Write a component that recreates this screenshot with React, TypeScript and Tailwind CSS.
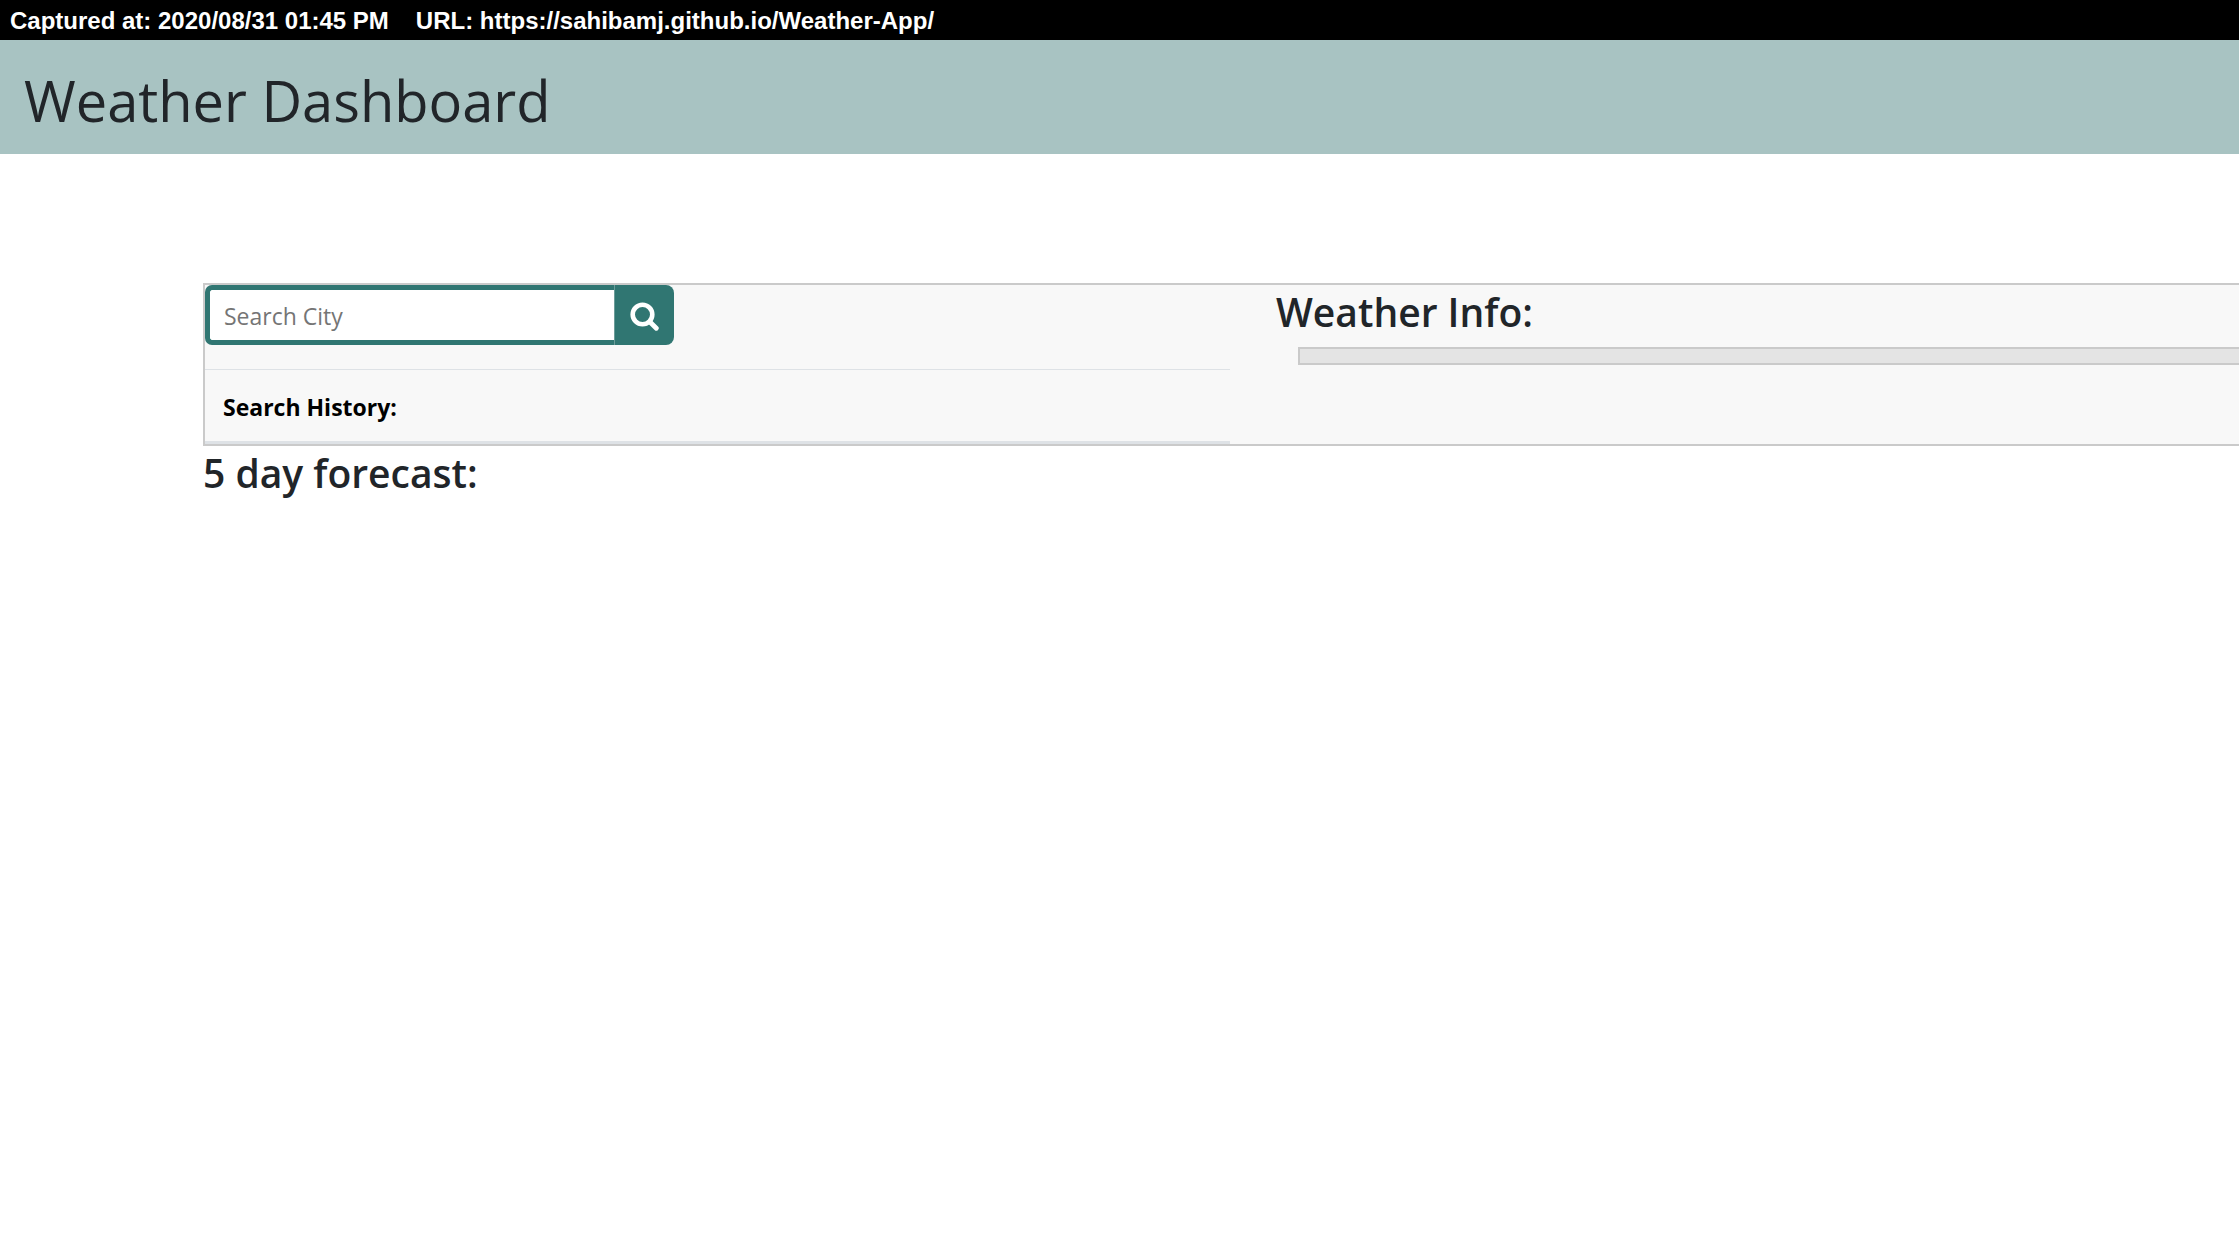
import { useState } from "react";

function CaptureBar() {
  return (
    <div className="flex h-10 items-center gap-[27px] whitespace-nowrap bg-black px-2.5 pt-0.5 font-['Liberation_Sans',sans-serif] text-2xl font-bold text-white">
      <span>Captured at: 2020/08/31 01:45 PM</span>
      <span>URL: https://sahibamj.github.io/Weather-App/</span>
    </div>
  );
}

function SearchForm() {
  const [city, setCity] = useState("");
  return (
    <form className="flex h-[60px] w-[469px]" onSubmit={(e) => e.preventDefault()}>
      <input
        type="text"
        aria-label="Search City"
        placeholder="Search City"
        value={city}
        onChange={(e) => setCity(e.target.value)}
        className="min-w-0 flex-1 rounded-l-[7px] border-[5px] border-r-0 border-[#307672] bg-white pb-0 pl-3.5 pt-0.5 text-[23px] text-[#212529] outline-none placeholder:text-[#757575]"
      />
      <button
        type="submit"
        aria-label="Search"
        className="flex w-[60px] items-center justify-center rounded-r-lg border-l border-[#6b9c99] bg-[#307672] pt-0.5 text-white"
      >
        <svg viewBox="0 0 29 29" className="size-[29px]" fill="none" stroke="currentColor" strokeLinecap="round">
          <circle cx="12.5" cy="12.5" r="9.8" strokeWidth="4.6" />
          <path d="M20 20l6.3 6.3" strokeWidth="4.8" />
        </svg>
      </button>
    </form>
  );
}

export default function App() {
  return (
    <div className="min-h-screen overflow-x-hidden bg-white font-['Open_Sans',sans-serif] text-[#212529]">
      <CaptureBar />
      <header className="flex h-[114px] items-center bg-[#a8c3c2] px-6">
        <h1 className="pt-1.5 text-[56px] font-normal leading-none">Weather Dashboard</h1>
      </header>

      <main className="ml-[203px] pt-[129px]">
        <section className="grid grid-cols-[1025fr_963fr] gap-x-[46px] border-2 border-r-0 border-[#cacaca] bg-[#f8f8f8]">
          <div>
            <SearchForm />
            <table className="mt-6 w-full border-collapse">
              <thead>
                <tr>
                  <th className="h-[73px] border-b-[3px] border-t border-b-[#dee2e6] border-t-[#dee2e6] px-[18px] pb-0 pt-1 text-left text-[23px] font-bold text-black">
                    Search History:
                  </th>
                </tr>
              </thead>
            </table>
          </div>
          <div>
            <h2 className="text-[39px] font-semibold leading-[54px]">Weather Info:</h2>
            <div className="ml-[22px] mt-2 h-[18px] border-2 border-r-0 border-[#cacaca] bg-[#e4e4e4]" />
          </div>
        </section>
        <h2 className="text-[39px] font-semibold leading-[54px]">5 day forecast:</h2>
      </main>
    </div>
  );
}
